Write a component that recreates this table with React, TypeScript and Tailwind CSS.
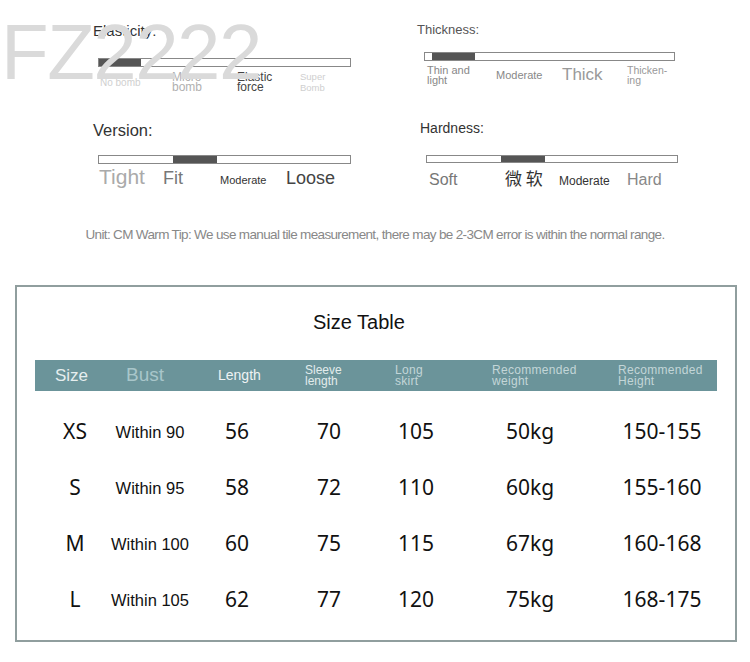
import React from "react";

const rows = [
  { s: "XS", b: "Within 90", l: "56", sl: "70", sk: "105", w: "50kg", h: "150-155" },
  { s: "S", b: "Within 95", l: "58", sl: "72", sk: "110", w: "60kg", h: "155-160" },
  { s: "M", b: "Within 100", l: "60", sl: "75", sk: "115", w: "67kg", h: "160-168" },
  { s: "L", b: "Within 105", l: "62", sl: "77", sk: "120", w: "75kg", h: "168-175" },
];

const num = { fontFamily: '"Noto Sans", "Open Sans", sans-serif' };

export default function App() {
  return (
    <div
      className="relative w-[750px] h-[662px] bg-white overflow-hidden"
      style={{ fontFamily: '"Liberation Sans", Arial, sans-serif' }}
    >
      {/* Top section */}
      <div className="h-[226px] flex pl-[93px]">
        {/* Left column */}
        <div className="w-[324px] flex flex-col">
          {/* Elasticity */}
          <div className="mt-[22px] text-[15px] leading-[18px] text-[#333]">Elasticity:</div>
          <div className="mt-[18px] ml-[5px] w-[253px] h-[9px] border border-[#888] bg-white">
            <div className="h-full w-[42px] bg-[#555]" />
          </div>
          <div className="ml-[5px] mt-[4px] h-[22px] grid grid-cols-[72px_65px_63px_60px] items-center pl-[2px]">
            <div className="text-[10px] leading-[11px] text-[#cfcfcf]">No bomb</div>
            <div className="text-[12px] leading-[10px] text-[#b0b0b0]">
              Micro
              <br />
              bomb
            </div>
            <div className="text-[12px] leading-[10px] text-[#444]">
              Elastic
              <br />
              force
            </div>
            <div className="text-[9.5px] leading-[11px] text-[#cfcfcf]">
              Super
              <br />
              Bomb
            </div>
          </div>

          {/* Version */}
          <div className="mt-[28px] text-[16.5px] leading-[19px] text-[#333]">Version:</div>
          <div className="mt-[15px] ml-[5px] w-[253px] h-[9px] border border-[#888] bg-white">
            <div className="h-full w-[44px] ml-[74px] bg-[#555]" />
          </div>
          <div className="ml-[5px] mt-[1px] pl-[1px] flex items-baseline leading-[24px]">
            <div className="w-[64px] text-[21px] text-[#aaa]">Tight</div>
            <div className="w-[57px] text-[18px] text-[#777]">Fit</div>
            <div className="w-[66px] text-[11px] text-[#333]">Moderate</div>
            <div className="text-[18px] text-[#444]">Loose</div>
          </div>
        </div>

        {/* Right column */}
        <div className="flex flex-col">
          {/* Thickness */}
          <div className="mt-[22px] text-[13px] leading-[16px] text-[#555]">Thickness:</div>
          <div className="mt-[14px] ml-[7px] w-[251px] h-[9px] border border-[#888] bg-white">
            <div className="h-full w-[43px] ml-[7px] bg-[#555]" />
          </div>
          <div className="ml-[7px] mt-[2px] h-[24px] pl-[3px] grid grid-cols-[69px_66px_65px_60px] items-center">
            <div className="text-[11px] leading-[10px] text-[#888]">
              Thin and
              <br />
              light
            </div>
            <div className="text-[11px] leading-[12px] text-[#888]">Moderate</div>
            <div className="text-[17px] leading-[20px] text-[#999]">Thick</div>
            <div className="text-[10.5px] leading-[10px] text-[#999]">
              Thicken-
              <br />
              ing
            </div>
          </div>

          {/* Hardness */}
          <div className="mt-[33px] ml-[3px] text-[14px] leading-[17px] text-[#333]">Hardness:</div>
          <div className="mt-[18px] ml-[9px] w-[252px] h-[8px] border border-[#888] bg-white">
            <div className="h-full w-[44px] ml-[74px] bg-[#555]" />
          </div>
          <div className="ml-[9px] mt-[3px] pl-[3px] flex items-baseline leading-[24px]">
            <div className="w-[76px] text-[16px] text-[#777]">Soft</div>
            <div
              className="w-[54px] text-[17px] text-[#333]"
              style={{ fontFamily: '"Noto Sans CJK SC", "Liberation Sans", sans-serif' }}
            >
              微 软
            </div>
            <div className="w-[68px] text-[12px] text-[#333]">Moderate</div>
            <div className="text-[16px] text-[#888]">Hard</div>
          </div>
        </div>
      </div>

      {/* Note */}
      <div className="h-[18px] leading-[18px] text-center text-[13.5px] text-[#888] tracking-[-0.65px]">
        Unit: CM Warm Tip: We use manual tile measurement, there may be 2-3CM error is within the normal range.
      </div>

      {/* Size table box */}
      <div className="mt-[41px] ml-[15px] w-[722px] h-[357px] border-2 border-[#909e9e] flex flex-col">
        <div className="mt-[23px] ml-[296px] text-[20px] leading-[24px] text-[#111]">Size Table</div>
        <div className="mt-[26px] ml-[18px] w-[682px] h-[31px] bg-[#6b949a] grid grid-cols-[80px_70px_104px_80px_94px_134px_120px] items-center">
          <div className="pl-[20px] text-[17px] text-[#e6eeef] whitespace-nowrap">Size</div>
          <div className="pl-[11px] text-[19px] text-[#a8c6ca] whitespace-nowrap">Bust</div>
          <div className="pl-[33px] text-[14px] text-[#eef3f4] whitespace-nowrap">Length</div>
          <div className="pl-[16px] text-[12px] leading-[10.5px] text-[#e2ecec]">
            Sleeve
            <br />
            length
          </div>
          <div className="pl-[26px] text-[12px] leading-[10.5px] text-[#c3d6d8] tracking-[0.3px]">
            Long
            <br />
            skirt
          </div>
          <div className="pl-[29px] text-[12px] leading-[10.5px] text-[#c3d6d8] tracking-[0.3px]">
            Recommended
            <br />
            weight
          </div>
          <div className="pl-[21px] text-[12px] leading-[10.5px] text-[#c3d6d8] tracking-[0.3px]">
            Recommended
            <br />
            Height
          </div>
        </div>
        <div className="mt-[13px] ml-[18px] flex flex-col">
          {rows.map((r) => (
            <div
              key={r.s}
              className="h-[56px] grid grid-cols-[80px_70px_104px_80px_94px_134px_130px] items-center text-[#111] whitespace-nowrap"
            >
              <div className="flex justify-center text-[21px]" style={num}>
                {r.s}
              </div>
              <div className="flex justify-center text-[16.5px]">{r.b}</div>
              <div className="flex justify-center text-[21px]" style={num}>
                {r.l}
              </div>
              <div className="flex justify-center text-[21px]" style={num}>
                {r.sl}
              </div>
              <div className="flex justify-center text-[21px]" style={num}>
                {r.sk}
              </div>
              <div className="flex justify-center text-[21px]" style={num}>
                {r.w}
              </div>
              <div className="flex justify-center text-[21px]" style={num}>
                {r.h}
              </div>
            </div>
          ))}
        </div>
      </div>

      {/* Watermark */}
      <div className="absolute left-[1px] top-[13px] text-[78px] leading-[78px] tracking-[-1.5px] text-[#dadada] select-none pointer-events-none">
        FZ2222
      </div>
    </div>
  );
}
